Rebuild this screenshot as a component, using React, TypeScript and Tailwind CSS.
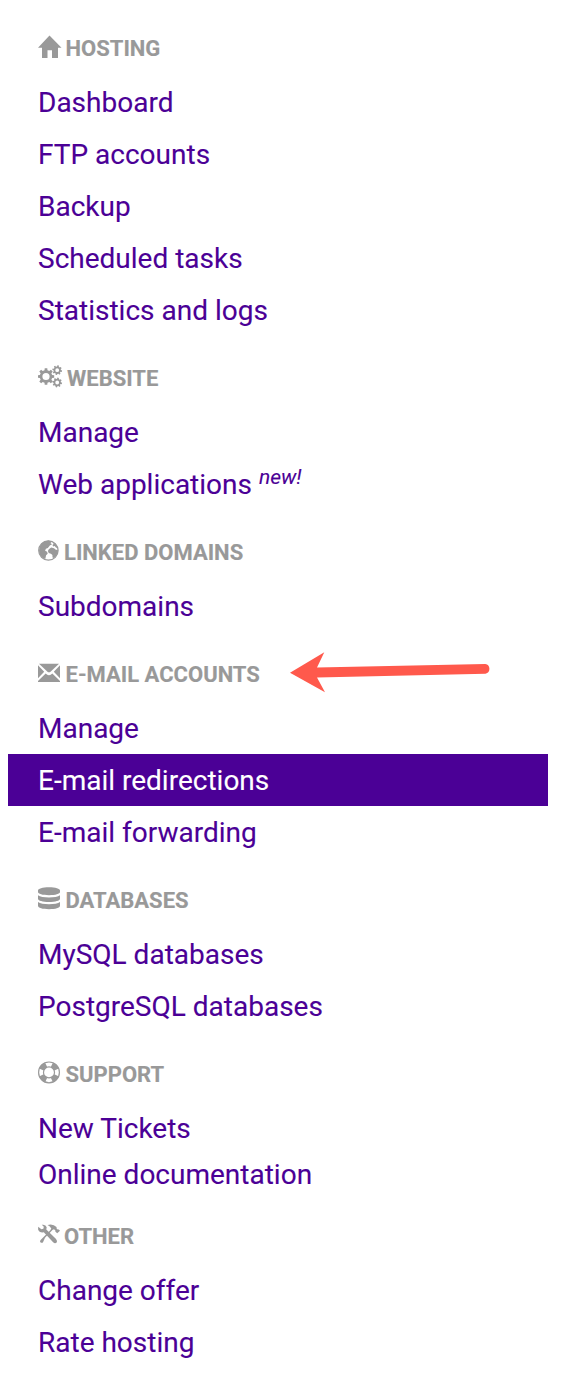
import React from 'react';

type IconName = 'home' | 'cogs' | 'globe' | 'mail' | 'database' | 'support' | 'tools';
type Item = { label: string; badge?: string; active?: boolean; compact?: boolean };
type Section = { title: string; icon: IconName; iconClass: string; items: Item[] };

const sections: Section[] = [
  {
    title: 'HOSTING', icon: 'home', iconClass: 'w-[27.5px]',
    items: [{ label: 'Dashboard' }, { label: 'FTP accounts' }, { label: 'Backup' }, { label: 'Scheduled tasks' }, { label: 'Statistics and logs' }],
  },
  {
    title: 'WEBSITE', icon: 'cogs', iconClass: 'w-[29px]',
    items: [{ label: 'Manage' }, { label: 'Web applications', badge: 'new!' }],
  },
  { title: 'LINKED DOMAINS', icon: 'globe', iconClass: 'w-[26px]', items: [{ label: 'Subdomains' }] },
  {
    title: 'E-MAIL ACCOUNTS', icon: 'mail', iconClass: 'w-[27.5px]',
    items: [{ label: 'Manage' }, { label: 'E-mail redirections', active: true }, { label: 'E-mail forwarding' }],
  },
  {
    title: 'DATABASES', icon: 'database', iconClass: 'w-[27.5px]',
    items: [{ label: 'MySQL databases' }, { label: 'PostgreSQL databases' }],
  },
  {
    title: 'SUPPORT', icon: 'support', iconClass: 'w-[27.5px]',
    items: [{ label: 'New Tickets' }, { label: 'Online documentation', compact: true }],
  },
  { title: 'OTHER', icon: 'tools', iconClass: 'w-[26px]', items: [{ label: 'Change offer' }, { label: 'Rate hosting' }] },
];

function gearPath(cx: number, cy: number, r: number, hole: number, teeth: number, turn = 0) {
  const points: string[] = [];
  const step = (Math.PI * 2) / teeth;
  for (let i = 0; i < teeth; i++) {
    const a = i * step + turn;
    [[-0.3, 0.76], [-0.2, 1], [0.2, 1], [0.3, 0.76]].forEach(([offset, scale]) => {
      const t = a + offset * step;
      points.push(`${(cx + Math.cos(t) * r * scale).toFixed(2)} ${(cy + Math.sin(t) * r * scale).toFixed(2)}`);
    });
  }
  return `M${points.join('L')}ZM${cx - hole} ${cy}a${hole} ${hole} 0 1 0 ${hole * 2} 0a${hole} ${hole} 0 1 0 ${-hole * 2} 0Z`;
}

function Icon({ name }: { name: IconName }) {
  return (
    <svg width="25" height="24" viewBox="0 0 25 24" fill="currentColor" fillRule="evenodd" className="block shrink-0">
      {name === 'home' && <path d="M11.5.5 23.5 12.8H20V23h-6v-7.8H9.5V23H4V12.8H0L11.5.5Z" />}
      {name === 'cogs' && (
        <>
          <path d={gearPath(8, 11.5, 8.3, 3.6, 8)} />
          <path d={gearPath(19.2, 5.2, 4.9, 1.9, 8, 0.2)} />
          <path d={gearPath(19.2, 17.5, 4.9, 1.9, 8, 0.2)} />
        </>
      )}
      {name === 'globe' && (
        <>
          <circle cx="10.4" cy="11.5" r="9.7" fill="none" stroke="currentColor" strokeWidth="1.2" />
          <path d="M1 11.5Q1.5 4.6 6.3 2.4L10.5 1.5l3 1-1 1.8 1.6 1-2.3 1.3-1.9 2.4-2 .8-.8 2 2 1 .6 2-1.6 1.5-.8 3.8-1.9-.5Q1 16.5 1 11.5Z" />
          <path d="m15 3 3 2.3 1.7 3.9-1.8-.7-1.2-1.4-1.4.4-.9-1.5 1.2-1.1Z" />
          <path d="m10.8 10.2 2.4-1.7 2.8.8 1.8 1.4 2.1.4v2.7l-1.7 3.2-2.4 1.9-1.3-.4-.1-2.5-1.5-1.3-2.2-.8-.8-1.9Z" />
        </>
      )}
      {name === 'mail' && (
        <>
          <path d="M1 2.7h20l-8.2 7.8q-1.8 1.7-3.6 0Z" />
          <path d="m0 4.3 6.2 6.5L0 17.2Zm22 0v12.9l-6.2-6.4ZM7.7 12.4l.9.9q2.4 2 4.8 0l.9-.9 7.7 7.5v1H0v-1Z" />
        </>
      )}
      {name === 'database' && (
        <path d="M11 .3C4.5.3 0 1.7 0 3.5v1.6c0 2 4.7 3.1 11 3.1s11-1.1 11-3.1V3.5C22 1.7 17.5.3 11 .3ZM0 8.2v3.5c0 2 4.7 3.2 11 3.2s11-1.2 11-3.2V8.2c-2 1.6-6 2.2-11 2.2S2 9.8 0 8.2Zm0 6.9v3.7C0 21 4.7 22.2 11 22.2s11-1.2 11-3.4v-3.7c-2 1.6-6 2.2-11 2.2s-9-.6-11-2.2Z" />
      )}
      {name === 'support' && (
        <>
          <circle cx="11" cy="11.4" r="10.4" fill="none" stroke="currentColor" strokeWidth="1.2" />
          <circle cx="11" cy="11.4" r="5.5" fill="none" stroke="currentColor" strokeWidth="1.2" />
          {[0, 90, 180, 270].map((angle) => (
            <path key={angle} transform={`rotate(${angle} 11 11.4)`} d="M7 1.5Q2.8 3.4 1 7.4l4.7 2.2Q6.7 7.1 9.2 6.1Z" />
          ))}
        </>
      )}
      {name === 'tools' && (
        <>
          <path d="M3.8 1.8Q7.7 1 8.7 4.3l-.4 2.1 9.5 9.4q2 2.5.6 3.9-1.6 1.2-3.5-.8L5.8 9.3Q1.2 9.9.1 6.4L.2 3.8l3.2 2.4 2-.5.4-1.9Z" />
          <path d="M9.6 2q5.4-1.6 8.9 2.1l.2 1.6 1 .8 1.1-.1 1.2 1.4-2.8 2.5-1.9-1.8.1-1.1-1.4-1.1-1.3.4-7.7 8.1-2.1 4.7q-1.5.8-2.5-.2-.9-1.2.2-2.4l9.7-9.7 1-1.7Q12.1 3 9.6 2Z" />
        </>
      )}
    </svg>
  );
}

export default function App() {
  return (
    <main className="relative h-[1396px] w-[578px] bg-white pt-[6px] font-[Roboto,sans-serif] text-[#4b0096]">
      <nav aria-label="Hosting menu" className="ml-2 w-[540px]">
        {sections.map((section) => (
          <section key={section.title}>
            <h2 className="flex h-[70px] items-start pt-[29px] pl-[30px] text-[22px] leading-7 font-bold text-[#999999] [-webkit-text-stroke:0.15px_currentColor]">
              <span className={`flex h-7 shrink-0 items-start ${section.iconClass}`}>
                <Icon name={section.icon} />
              </span>
              <span className="whitespace-nowrap">{section.title}</span>
            </h2>
            <ul>
              {section.items.map((item) => (
                <li
                  key={item.label}
                  className={`flex items-center pt-0.5 pl-[30px] text-[28px] leading-[38px] [-webkit-text-stroke:0.1px_currentColor] ${item.compact ? 'h-10' : 'h-[52px]'} ${item.active ? 'bg-[#4b0096] text-white' : ''}`}
                >
                  <a href="#" className="whitespace-nowrap">
                    {item.label}
                    {item.badge && <sup className="relative top-[-10px] ml-[7px] align-baseline text-[21px] leading-none italic">{item.badge}</sup>}
                  </a>
                </li>
              ))}
            </ul>
          </section>
        ))}
      </nav>
      <svg className="pointer-events-none absolute top-[650px] left-[288px]" width="206" height="44" viewBox="0 0 206 44" fill="#ff594c" aria-hidden="true">
        <path d="M2 22.8 36.3 2.3 29 17.6 197.3 14a5 5 0 0 1 .2 9.8L29 27.4 37 42.2Z" />
      </svg>
    </main>
  );
}
